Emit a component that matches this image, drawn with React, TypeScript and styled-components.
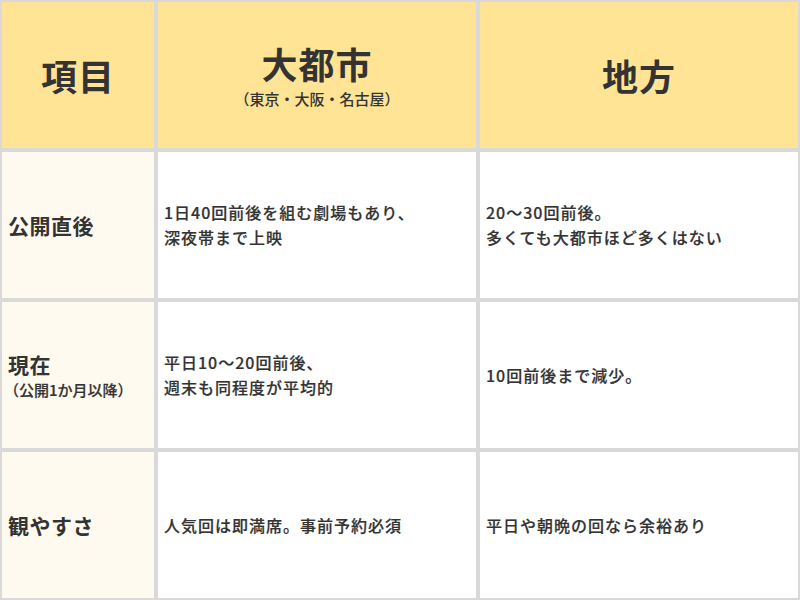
import styled, { createGlobalStyle } from 'styled-components';

const GlobalStyle = createGlobalStyle`
  html, body {
    margin: 0;
    padding: 0;
    background: #ffffff;
  }
  body {
    font-family: "Noto Sans CJK JP", "Noto Sans", sans-serif;
    color: #333333;
  }
`;

type Row = {
  label: string;
  note?: string;
  city: string[];
  local: string[];
};

const rows: Row[] = [
  {
    label: '公開直後',
    city: ['1日40回前後を組む劇場もあり、', '深夜帯まで上映'],
    local: ['20～30回前後。', '多くても大都市ほど多くはない'],
  },
  {
    label: '現在',
    note: '（公開1か月以降）',
    city: ['平日10～20回前後、', '週末も同程度が平均的'],
    local: ['10回前後まで減少。'],
  },
  {
    label: '観やすさ',
    city: ['人気回は即満席。事前予約必須'],
    local: ['平日や朝晩の回なら余裕あり'],
  },
];

function App() {
  return (
    <>
      <GlobalStyle />
      <Table>
        <colgroup>
          <col style={{ width: 156 }} />
          <col style={{ width: 322 }} />
          <col style={{ width: 322 }} />
        </colgroup>
        <thead>
          <tr>
            <HeadCell>
              <HeadTitle>項目</HeadTitle>
            </HeadCell>
            <HeadCell>
              <HeadTitle>大都市</HeadTitle>
              <HeadNote>（東京・大阪・名古屋）</HeadNote>
            </HeadCell>
            <HeadCell>
              <HeadTitle>地方</HeadTitle>
            </HeadCell>
          </tr>
        </thead>
        <tbody>
          {rows.map((row) => (
            <tr key={row.label}>
              <LabelCell>
                <Label>{row.label}</Label>
                {row.note && <LabelNote>{row.note}</LabelNote>}
              </LabelCell>
              <BodyCell>
                {row.city.map((line) => (
                  <Line key={line}>{line}</Line>
                ))}
              </BodyCell>
              <BodyCell>
                {row.local.map((line) => (
                  <Line key={line}>{line}</Line>
                ))}
              </BodyCell>
            </tr>
          ))}
        </tbody>
      </Table>
    </>
  );
}

const Table = styled.table`
  width: 800px;
  height: 600px;
  border-collapse: separate;
  border-spacing: 0;
  table-layout: fixed;
`;

const Cell = styled.td`
  box-sizing: border-box;
  height: 150px;
  border: 2px solid #d9d9d9;
  vertical-align: middle;
  padding: 0 6px;
`;

const HeadCell = styled(Cell).attrs({ as: 'th' })`
  background: #ffe496;
  text-align: center;
  font-weight: 700;
  padding: 0;
`;

const HeadTitle = styled.div`
  font-size: 36px;
  line-height: 44px;
  letter-spacing: 1px;
`;

const HeadNote = styled.div`
  font-size: 15px;
  font-weight: 500;
  line-height: 20px;
  margin-top: 4px;
`;

const LabelCell = styled(Cell)`
  background: #fffaef;
`;

const Label = styled.div`
  font-size: 21px;
  font-weight: 700;
  line-height: 28px;
  letter-spacing: 0.5px;
`;

const LabelNote = styled.div`
  font-size: 15px;
  font-weight: 500;
  line-height: 20px;
  margin: 2px 0 0 -4px;
  -webkit-text-stroke: 0.2px #333333;
`;

const BodyCell = styled(Cell)`
  background: #ffffff;
`;

const Line = styled.div`
  font-size: 16px;
  font-weight: 500;
  line-height: 25px;
  letter-spacing: 1px;
  -webkit-text-stroke: 0.2px #333333;
`;

export default App;
